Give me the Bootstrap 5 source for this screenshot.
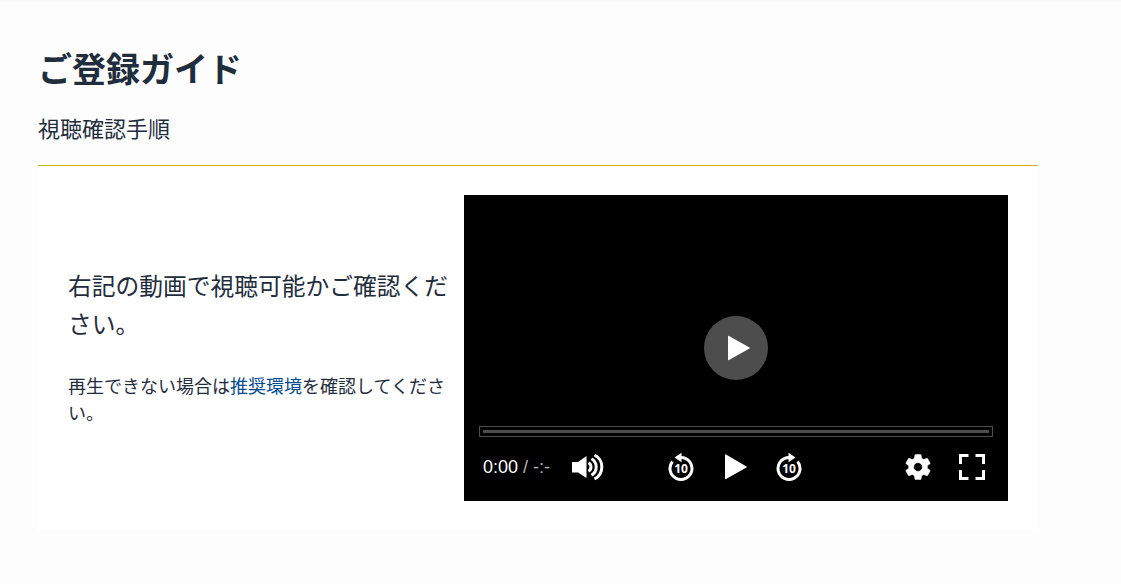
<!DOCTYPE html>
<html lang="ja">
<head>
<meta charset="utf-8">
<meta name="viewport" content="width=device-width, initial-scale=1">
<title>ご登録ガイド</title>
<link href="https://cdn.jsdelivr.net/npm/bootstrap@5.3.0/dist/css/bootstrap.min.css" rel="stylesheet">
<style>
  body { background: #fdfdfd; color: #1f2d3d; font-family: "Noto Sans CJK JP", sans-serif; border-top: 2px solid #f8f8f8; }
  .guide { max-width: 1076px; padding: 40px 38px 53px; }
  .guide-title { font-size: 34px; line-height: 52px; margin-bottom: 18px; }
  .guide-sub { font-size: 22px; line-height: 30px; margin-bottom: 23px; }
  .guide-panel { background: #fff; border-top: 1px solid #d4b400; padding: 29px 30px 30px; }
  .guide-text { flex: 0 0 396px; padding: 0 12px 4px 0; }
  .guide-lead { line-height: 38px; margin-bottom: 30px; }
  .guide-note { font-size: 18px; line-height: 27px; margin-bottom: 0; }
  .guide-note a { color: #004a8f; }
  .player { background: #000; aspect-ratio: 16 / 9; min-width: 0; }
  .player button { background: none; border: 0; padding: 0; color: #fff; line-height: 0; }
  .player .big-play { background: #4d4d4d; width: 64px; height: 64px; }
  .seek { appearance: none; height: 11px; margin: 0 15px; border: 1px solid #4d4d4d; background: #4d4d4d content-box; padding: 3px; }
  .seek::-webkit-slider-thumb { appearance: none; width: 1px; height: 1px; }
  .bar { height: 64px; padding: 0 21px 4px 19px; }
  .clock { font: 18px/24px "Liberation Sans", Arial, sans-serif; color: #fff; width: 88px; }
  .clock span { color: #b3b3b3; }
  .side { flex: 1 1 0; }
  .ten { font: 700 12px "Open Sans", sans-serif; }
</style>
</head>
<body>
<main class="guide">
  <h1 class="guide-title fw-bold">ご登録ガイド</h1>
  <p class="guide-sub">視聴確認手順</p>
  <section class="guide-panel d-flex align-items-center">
    <div class="guide-text">
      <p class="guide-lead fs-4">右記の動画で視聴可能かご確認ください。</p>
      <p class="guide-note">再生できない場合は<a class="text-decoration-none" href="#">推奨環境</a>を確認してください。</p>
    </div>
    <div class="player position-relative flex-fill d-flex flex-column justify-content-end">
      <button type="button" class="big-play rounded-circle position-absolute top-50 start-50 translate-middle" aria-label="動画を再生">
        <svg width="64" height="64" viewBox="0 0 64 64" fill="currentColor"><path d="M24 20.500q0-1 1-.5L45.500 31.500q1 .5 0 1L25 44q-1 .5-1-.5z"/></svg>
      </button>
      <input class="seek" type="range" value="0" aria-label="再生位置">
      <div class="bar d-flex align-items-center">
        <div class="side d-flex align-items-center">
          <div class="clock">0:00 <span>/ -:-</span></div>
          <button type="button" aria-label="音量">
            <svg width="34" height="28" viewBox="0 0 34 28"><path fill="currentColor" d="M1 9h6L15.500 3v22L7 19.500H1z"/><path fill="none" stroke="currentColor" stroke-width="3" d="M17.500 9.800a4.800 4.800 0 0 1 0 8.400M20.500 5.800a9.500 9.500 0 0 1 0 16.400M23.500 2a13.500 13.500 0 0 1 0 24"/></svg>
          </button>
        </div>
        <div class="d-flex align-items-center gap-4">
          <button type="button" aria-label="10秒戻る">
            <svg width="30" height="30" viewBox="0 0 30 30"><path fill="none" stroke="currentColor" stroke-width="3" d="M15 5.500A11 11 0 1 1 6.500 9.500"/><path fill="currentColor" d="M8.500 5.500 15.500 .8v9.400z"/><text class="ten" x="15" y="21" text-anchor="middle" fill="currentColor">10</text></svg>
          </button>
          <button type="button" aria-label="再生">
            <svg width="30" height="30" viewBox="0 0 30 30" fill="currentColor"><path d="M5 3q0-1 1-.5L26.500 14.500q1 .5 0 1L6 27q-1 .5-1-.5z"/></svg>
          </button>
          <button type="button" aria-label="10秒進む">
            <svg width="30" height="30" viewBox="0 0 30 30"><path fill="none" stroke="currentColor" stroke-width="3" d="M15 5.500A11 11 0 1 0 23.500 9.500"/><path fill="currentColor" d="M21.500 5.500 14.500 .8v9.400z"/><text class="ten" x="15" y="21" text-anchor="middle" fill="currentColor">10</text></svg>
          </button>
        </div>
        <div class="side d-flex align-items-center justify-content-end gap-4">
          <button type="button" aria-label="設定">
            <svg width="30" height="30" viewBox="0 0 24 24" fill="currentColor" stroke="currentColor" stroke-width=".4"><path d="M19.430 12.980c.04-.32.070-.64.070-.98s-.03-.66-.07-.98l2.110-1.650c.19-.15.240-.42.120-.64l-2-3.460c-.12-.22-.39-.3-.61-.22l-2.490 1c-.52-.4-1.080-.73-1.690-.98l-.38-2.650C14.460 2.180 14.250 2 14 2h-4c-.25 0-.46.180-.49.420l-.38 2.650c-.61.250-1.170.590-1.690.98l-2.490-1c-.23-.09-.49 0-.61.220l-2 3.460c-.13.220-.07.490.120.640l2.110 1.650c-.04.320-.07.650-.07.980s.03.660.070.980l-2.110 1.650c-.19.150-.24.420-.12.640l2 3.460c.12.220.390.300.610.220l2.490-1c.52.400 1.080.730 1.690.980l.38 2.650c.03.240.240.420.490.420h4c.25 0 .46-.18.490-.42l.38-2.650c.61-.25 1.170-.59 1.690-.98l2.490 1c.23.090.490 0 .61-.22l2-3.460c.12-.22.070-.49-.12-.64zM12 15.500a3.500 3.500 0 1 1 0-7 3.500 3.500 0 0 1 0 7z"/></svg>
          </button>
          <button type="button" aria-label="全画面表示">
            <svg width="30" height="30" viewBox="0 0 30 30" fill="none" stroke="currentColor" stroke-width="3"><path d="M11.500 3.500h-8V12M18.500 3.500h8V12M11.500 26.500h-8V18M18.500 26.500h8V18"/></svg>
          </button>
        </div>
      </div>
    </div>
  </section>
</main>
<script src="https://cdn.jsdelivr.net/npm/bootstrap@5.3.0/dist/js/bootstrap.bundle.min.js"></script>
</body>
</html>
